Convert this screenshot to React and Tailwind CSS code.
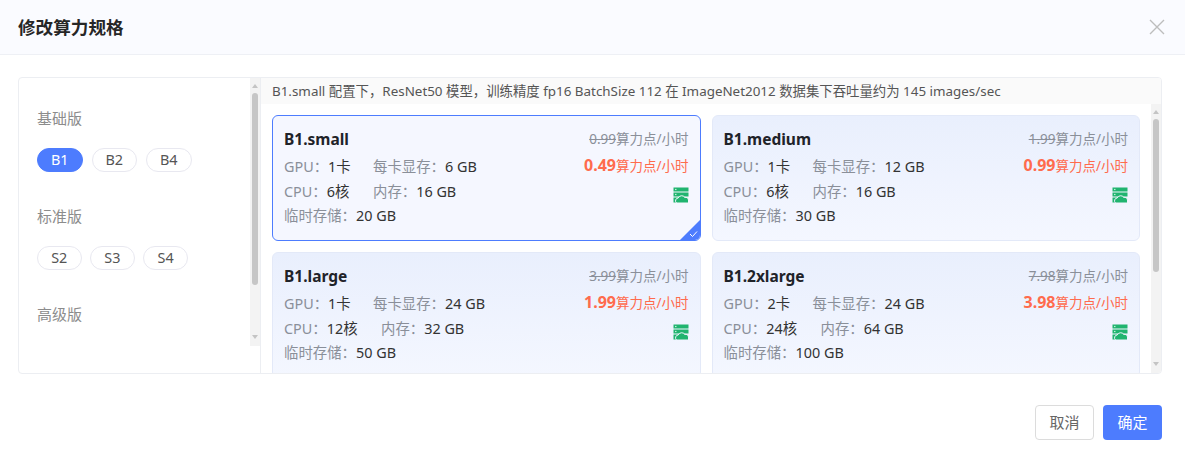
const font = { fontFamily: '"Noto Sans", "Noto Sans CJK SC", sans-serif' }

const groups = [
  { title: '基础版', items: ['B1', 'B2', 'B4'], active: 'B1' },
  { title: '标准版', items: ['S2', 'S3', 'S4'] },
]

const cards = [
  { name: 'B1.small', old: '0.99', price: '0.49', gpu: '1卡', vram: '6 GB', cpu: '6核', mem: '16 GB', disk: '20 GB', selected: true },
  { name: 'B1.medium', old: '1.99', price: '0.99', gpu: '1卡', vram: '12 GB', cpu: '6核', mem: '16 GB', disk: '30 GB' },
  { name: 'B1.large', old: '3.99', price: '1.99', gpu: '1卡', vram: '24 GB', cpu: '12核', mem: '32 GB', disk: '50 GB' },
  { name: 'B1.2xlarge', old: '7.98', price: '3.98', gpu: '2卡', vram: '24 GB', cpu: '24核', mem: '64 GB', disk: '100 GB' },
]

function ServerIcon({ bg }) {
  return (
    <svg width="16" height="16" viewBox="0 0 16 16" className="mt-[9px]">
      <path d="M.5.5h15v4H.5z" fill="#20b46f" />
      <path d="M.5 5.5h15v4H.5z" fill="#20b46f" />
      <path d="M.5 10.5h6v5h-6z" fill="#20b46f" />
      <path d="M3.6 16a2.8 2.8 0 0 1 1.6-5 3.8 3.8 0 0 1 6.6-.6 3 3 0 0 1 3.7 2.6V16z" fill="#20b46f" stroke={bg} strokeWidth="1" />
      <rect x="2" y="1.9" width="1.5" height="1.2" fill="#bff0d8" />
      <rect x="2" y="6.9" width="1.5" height="1.2" fill="#bff0d8" />
    </svg>
  )
}

function ScrollTrack({ thumb, className }) {
  return (
    <div className={`w-[10px] shrink-0 bg-[#f3f3f3] flex flex-col items-center ${className}`}>
      <div className="mt-[6px] w-0 h-0 border-x-[3.5px] border-x-transparent border-b-[4px] border-b-[#c4c4c4]" />
      <div className={`mt-[5px] w-[6px] rounded-full bg-[#c6c6c6] ${thumb}`} />
      <div className="mt-auto mb-[7px] w-0 h-0 border-x-[3.5px] border-x-transparent border-t-[4px] border-t-[#c4c4c4]" />
    </div>
  )
}

function Card({ card }) {
  return (
    <div className={`relative h-[126px] shrink-0 rounded-[6px] border px-[11px] pt-[11px] flex justify-between overflow-hidden ${card.selected ? 'border-[#4d7cfe] bg-[#f5f7ff]' : 'border-[#e3e9f8] bg-gradient-to-b from-[#e9effd] to-[#f4f7ff]'}`}>
      <div className="text-[14.4px] leading-[24.5px]">
        <div className="text-[15.5px] font-bold text-[#1f2329] leading-[24px] mb-[4px]">{card.name}</div>
        <div className="flex">
          <div className="w-[89px]"><span className="text-[#8a8f99]">GPU：</span><span className="text-[#333]">{card.gpu}</span></div>
          <div><span className="text-[#8a8f99]">每卡显存：</span><span className="text-[#333]">{card.vram}</span></div>
        </div>
        <div className="flex">
          <div className={card.cpu.length > 2 ? 'w-[97px]' : 'w-[89px]'}><span className="text-[#8a8f99]">CPU：</span><span className="text-[#333]">{card.cpu}</span></div>
          <div><span className="text-[#8a8f99]">内存：</span><span className="text-[#333]">{card.mem}</span></div>
        </div>
        <div><span className="text-[#8a8f99]">临时存储：</span><span className="text-[#333]">{card.disk}</span></div>
      </div>
      <div className="flex flex-col items-end text-[13.5px] leading-[24px]">
        <div className="text-[#8a8f99]"><span className="line-through">{card.old}</span>算力点/小时</div>
        <div className="text-[#ff6b4d] mt-[2px]"><span className="font-bold text-[16px]">{card.price}</span>算力点/小时</div>
        <ServerIcon bg={card.selected ? '#f5f7ff' : '#eef2fe'} />
      </div>
      {card.selected && (
        <div className="absolute right-0 bottom-0 w-[20px] h-[20px]">
          <svg width="20" height="20" viewBox="0 0 20 20">
            <path d="M20 0v20H0z" fill="#4d7cfe" />
            <path d="M10 14l2.5 2.5L17 11.5" fill="none" stroke="#fff" strokeWidth="1" />
          </svg>
        </div>
      )}
    </div>
  )
}

export default function App() {
  return (
    <div style={font} className="w-[1185px] h-[461px] bg-white overflow-hidden flex flex-col">
      <header className="h-[55px] shrink-0 bg-[#fafbff] border-b border-[#eef0f5] pl-[18px] pr-[20px] flex items-center justify-between">
        <h1 className="text-[17.6px] font-bold text-[#262626]">修改算力规格</h1>
        <svg width="16" height="16" viewBox="0 0 16 16">
          <path d="M1 1l14 14M15 1L1 15" stroke="#bdbdbd" strokeWidth="1.4" />
        </svg>
      </header>

      <main className="mt-[22px] mx-[18px] w-[1144px] h-[297px] shrink-0 border border-[#eceef2] rounded-[4px] flex overflow-hidden">
        <aside className="w-[242px] shrink-0 h-full border-r border-[#eceef2] flex items-start">
          <div className="flex-1 h-[244px] overflow-hidden pl-[18px] pt-[28px]">
            {groups.map(group => (
              <div key={group.title} className="mb-[32px]">
                <div className="text-[15px] leading-[24px] text-[#8c8c8c]">{group.title}</div>
                <div className={`flex mt-[18px] ${group.active ? 'gap-[9px]' : 'gap-[8.7px]'}`}>
                  {group.items.map(item => (
                    <div key={item} className={`h-[24px] rounded-full border text-[14.4px] leading-[22px] text-center ${group.active ? 'w-[45.5px]' : 'w-[44.5px]'} ${group.active === item ? 'bg-[#4d7cfe] border-[#4d7cfe] text-white' : 'border-[#e8e8f0] text-[#555]'}`}>{item}</div>
                  ))}
                </div>
              </div>
            ))}
            <div className="text-[15px] leading-[24px] text-[#8c8c8c]">高级版</div>
          </div>
          <ScrollTrack className="h-[268px]" thumb="h-[192px]" />
        </aside>

        <section className="flex-1 min-w-0 flex flex-col">
          <div className="h-[26px] shrink-0 bg-[#fafafa] pl-[11px] text-[13.4px] leading-[26px] text-[#555] whitespace-nowrap">
            B1.small 配置下，ResNet50 模型，训练精度 fp16 BatchSize 112 在 ImageNet2012 数据集下吞吐量约为 145 images/sec
          </div>
          <div className="flex-1 min-h-0 flex">
            <div className="flex-1 min-w-0 overflow-hidden px-[11px] pt-[11px]">
              <div className="grid grid-cols-2 gap-x-[11px] gap-y-[11px]">
                {cards.map(card => <Card key={card.name} card={card} />)}
              </div>
            </div>
            <ScrollTrack className="h-full" thumb="h-[153px]" />
          </div>
        </section>
      </main>

      <footer className="mt-[31px] pr-[23px] flex justify-end gap-[9px]">
        <button className="w-[59px] h-[35px] rounded-[4px] border border-[#dcdcdc] bg-white text-[15px] text-[#666]">取消</button>
        <button className="w-[59px] h-[35px] rounded-[4px] bg-[#4d7cfe] text-[15px] text-white">确定</button>
      </footer>
    </div>
  )
}
